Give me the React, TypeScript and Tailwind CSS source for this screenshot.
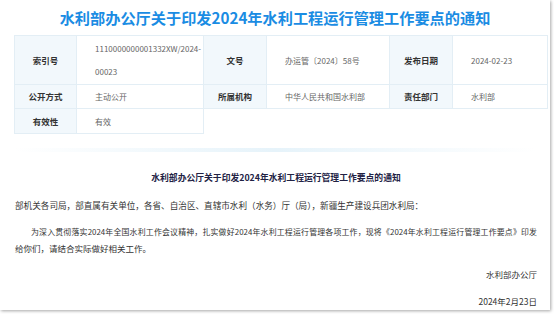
import React from "react";

const sans = { fontFamily: '"Noto Sans CJK SC", "Noto Sans", sans-serif' };

function Label({ children, first = false }: { children?: React.ReactNode; first?: boolean }) {
  return (
    <div className={`flex items-center justify-center bg-[#f2f8fc] border-r border-b border-[#e3eef5] font-bold text-[#333] text-[8.5px] ${first ? "border-l" : ""}`}>
      {children}
    </div>
  );
}

function Value({ children }: { children?: React.ReactNode }) {
  return (
    <div className="flex items-center pl-[18px] pr-[1px] border-r border-b border-[#e3eef5] text-[#666] text-[8px] leading-[23px] whitespace-nowrap">
      <div>{children}</div>
    </div>
  );
}

export default function App() {
  return (
    <div className="w-[554px] h-[314px] bg-white overflow-hidden" style={sans}>
      <div className="w-[550px] h-[310px] bg-white shadow-[1px_1px_3px_rgba(0,0,0,0.35)]">
        <div className="h-[35px] flex items-center justify-center text-[15.2px] font-bold text-[#1a8ce3]">
          水利部办公厅关于印发2024年水利工程运行管理工作要点的通知
        </div>
        <div className="ml-[14px] w-[534px] grid grid-cols-[63px_127px_63px_123px_63px_95px] grid-rows-[49px_24px_25px] border-t border-[#e3eef5]">
          <Label first>索引号</Label>
          <Value>1110000000001332XW/2024-<br />00023</Value>
          <Label>文号</Label>
          <Value>办运管〔2024〕58号</Value>
          <Label>发布日期</Label>
          <Value>2024-02-23</Value>

          <Label first>公开方式</Label>
          <Value>主动公开</Value>
          <Label>所属机构</Label>
          <Value>中华人民共和国水利部</Value>
          <Label>责任部门</Label>
          <Value>水利部</Value>

          <Label first>有效性</Label>
          <Value>有效</Value>
        </div>
        <div className="mt-[14px] mx-[14px] h-[4px] bg-gradient-to-r from-transparent via-[#e6f3fa] to-transparent" />
        <div className="pl-[15px] pr-[13px] text-[#333]">
          <div className="mt-[19px] text-center text-[8.8px] leading-[14px] font-bold text-[#222244]">
            水利部办公厅关于印发2024年水利工程运行管理工作要点的通知
          </div>
          <div className="mt-[13px] text-[8.6px] leading-[14px]">
            部机关各司局，部直属有关单位，各省、自治区、直辖市水利（水务）厅（局），新疆生产建设兵团水利局：
          </div>
          <div className="mt-[11px] text-[8.5px] leading-[17px]">
            <div className="pl-[16px] text-[7.9px] [text-align-last:justify]">
              为深入贯彻落实2024年全国水利工作会议精神，扎实做好2024年水利工程运行管理各项工作，现将《2024年水利工程运行管理工作要点》印发
            </div>
            <div>给你们，请结合实际做好相关工作。</div>
          </div>
          <div className="mt-[10px] text-right text-[8.5px] leading-[14px]">水利部办公厅</div>
          <div className="mt-[13px] text-right text-[8.5px] leading-[14px]">2024年2月23日</div>
        </div>
      </div>
    </div>
  );
}
